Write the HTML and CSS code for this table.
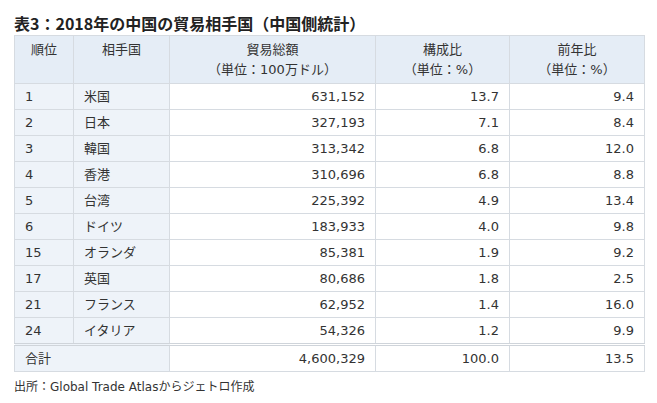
FILE: index.html
```html
<!DOCTYPE html>
<html lang="ja">
<head>
<meta charset="utf-8">
<link rel="stylesheet" href="styles.css">
</head>
<body>
<h3 class="title">表3：2018年の中国の貿易相手国（中国側統計）</h3>
<table class="trade">
  <colgroup>
    <col class="c-rank"><col class="c-country"><col class="c-total"><col class="c-share"><col class="c-growth">
  </colgroup>
  <thead>
    <tr>
      <th>順位</th>
      <th>相手国</th>
      <th>貿易総額<br>（単位：100万ドル）</th>
      <th>構成比<br>（単位：%）</th>
      <th>前年比<br>（単位：%）</th>
    </tr>
  </thead>
  <tbody>
    <tr><td class="lbl">1</td><td class="lbl">米国</td><td class="num">631,152</td><td class="num">13.7</td><td class="num">9.4</td></tr>
    <tr><td class="lbl">2</td><td class="lbl">日本</td><td class="num">327,193</td><td class="num">7.1</td><td class="num">8.4</td></tr>
    <tr><td class="lbl">3</td><td class="lbl">韓国</td><td class="num">313,342</td><td class="num">6.8</td><td class="num">12.0</td></tr>
    <tr><td class="lbl">4</td><td class="lbl">香港</td><td class="num">310,696</td><td class="num">6.8</td><td class="num">8.8</td></tr>
    <tr><td class="lbl">5</td><td class="lbl">台湾</td><td class="num">225,392</td><td class="num">4.9</td><td class="num">13.4</td></tr>
    <tr><td class="lbl">6</td><td class="lbl">ドイツ</td><td class="num">183,933</td><td class="num">4.0</td><td class="num">9.8</td></tr>
    <tr><td class="lbl">15</td><td class="lbl">オランダ</td><td class="num">85,381</td><td class="num">1.9</td><td class="num">9.2</td></tr>
    <tr><td class="lbl">17</td><td class="lbl">英国</td><td class="num">80,686</td><td class="num">1.8</td><td class="num">2.5</td></tr>
    <tr><td class="lbl">21</td><td class="lbl">フランス</td><td class="num">62,952</td><td class="num">1.4</td><td class="num">16.0</td></tr>
    <tr><td class="lbl">24</td><td class="lbl">イタリア</td><td class="num">54,326</td><td class="num">1.2</td><td class="num">9.9</td></tr>
  </tbody>
  <tfoot>
    <tr><td class="lbl" colspan="2">合計</td><td class="num">4,600,329</td><td class="num">100.0</td><td class="num">13.5</td></tr>
  </tfoot>
</table>
<p class="source">出所：Global Trade Atlasからジェトロ作成</p>
</body>
</html>
```
FILE: styles.css
```css
html, body {
  margin: 0;
  padding: 0;
  background: #ffffff;
}
body {
  padding: 0 14px;
  font-family: "DejaVu Sans", "Noto Sans CJK JP", sans-serif;
  color: #333333;
  font-size: 13px;
}
.title {
  margin: 12px 0 1px;
  font-family: "Noto Sans CJK JP", sans-serif;
  font-size: 16px;
  line-height: 22px;
  font-weight: 700;
  color: #222222;
}
.trade {
  border-collapse: collapse;
  width: 630px;
  table-layout: fixed;
}
.c-rank { width: 59px; }
.c-country { width: 96px; }
.c-total { width: 206px; }
.c-share { width: 134px; }
.c-growth { width: 135px; }
.trade th,
.trade td {
  border: 1px solid #d6dbe1;
  line-height: 19px;
  padding: 3px 10px;
}
.trade th {
  background: #e5edf6;
  font-weight: 400;
  text-align: center;
  vertical-align: top;
  line-height: 20px;
  padding: 4px 10px 3px;
}
.trade td.lbl {
  background: #eef3f9;
  text-align: left;
}
.trade td.num {
  background: #ffffff;
  text-align: right;
}
.trade tfoot td {
  border-top: 3px double #cfd4da;
}
.source {
  margin: 6px 0 0;
  font-size: 12px;
  line-height: 18px;
  color: #333333;
}
```
